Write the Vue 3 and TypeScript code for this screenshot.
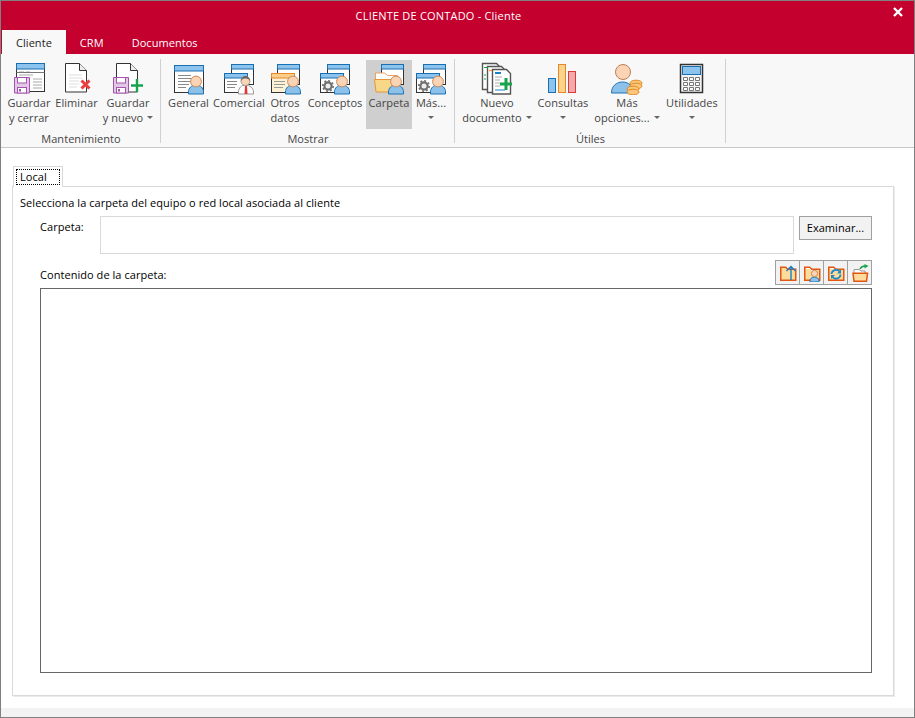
<script setup lang="ts">
interface Btn { id: string; lines: string[]; w: number; arrow?: 'inline' | 'below'; active?: boolean }
interface Group { label: string; buttons: Btn[] }

const groups: Group[] = [
  { label: 'Mantenimiento', buttons: [
    { id: 'save', lines: ['Guardar', 'y cerrar'], w: 48 },
    { id: 'del', lines: ['Eliminar'], w: 47 },
    { id: 'savenew', lines: ['Guardar', 'y nuevo'], w: 56, arrow: 'inline' },
  ] },
  { label: 'Mostrar', buttons: [
    { id: 'general', lines: ['General'], w: 47 },
    { id: 'comercial', lines: ['Comercial'], w: 54 },
    { id: 'otros', lines: ['Otros', 'datos'], w: 38 },
    { id: 'conceptos', lines: ['Conceptos'], w: 62 },
    { id: 'carpeta', lines: ['Carpeta'], w: 46, active: true },
    { id: 'mas', lines: ['Más...'], w: 38, arrow: 'below' },
  ] },
  { label: 'Útiles', buttons: [
    { id: 'doc', lines: ['Nuevo', 'documento'], w: 76, arrow: 'inline' },
    { id: 'chart', lines: ['Consultas'], w: 56, arrow: 'below' },
    { id: 'coins', lines: ['Más', 'opciones...'], w: 72, arrow: 'inline' },
    { id: 'calc', lines: ['Utilidades'], w: 58, arrow: 'below' },
  ] },
]
const tabs = ['Cliente', 'CRM', 'Documentos']
const tools = ['up', 'user', 'refresh', 'open']
</script>

<template>
  <div class="win">
    <svg class="defs" width="0" height="0">
      <defs>
        <g id="person">
          <path d="M15.500 32v-2c0-4 3-7 7.500-7s7.500 3 7.500 7v2z" fill="#8cc2ea" stroke="#1f72b4" />
          <circle cx="23" cy="19.500" r="5.400" fill="#fad4b4" stroke="#c98a5c" />
        </g>
        <g id="backwin">
          <rect x="8.500" y="2.500" width="22" height="20" fill="#fff" stroke="#333" />
          <rect x="8.500" y="2.500" width="22" height="4.500" fill="#8cc4ee" stroke="#1a6fb0" />
        </g>
        <g id="frontwin">
          <rect x="1.500" y="11.500" width="23" height="19" fill="#fff" stroke="#333" />
          <rect x="1.500" y="11.500" width="23" height="4.500" fill="#8cc4ee" stroke="#1a6fb0" />
        </g>
        <g id="floppy">
          <path d="M1.500 15.500h15v15.500h-15z" fill="#e2c8e6" stroke="#a354ad" />
          <rect x="4.500" y="15.500" width="9" height="5.500" fill="#fff" stroke="#a354ad" />
          <rect x="4.500" y="25.500" width="9" height="5.500" fill="#fff" stroke="#a354ad" />
          <rect x="6" y="27" width="2" height="2.500" fill="#a354ad" />
        </g>
        <g id="gear">
          <circle cx="9" cy="24" r="3.600" fill="#eee" stroke="#6f6f6f" stroke-width="2.200" />
          <circle cx="9" cy="24" r="5.200" fill="none" stroke="#6f6f6f" stroke-width="1.600" stroke-dasharray="2 2" />
        </g>
        <g id="page">
          <path d="M4.500 1.500h14l7 7v21.500h-21z" fill="#fff" stroke="#333" />
          <path d="M18.500 1.500v7h7" fill="#eee" stroke="#333" />
        </g>
        <g id="coin">
          <ellipse cx="0" cy="0" rx="6" ry="2.800" fill="#fbc77a" stroke="#e08a26" />
        </g>
      </defs>
    </svg>

    <header class="titlebar">
      <div class="title">CLIENTE DE CONTADO - Cliente</div>
      <svg class="close" width="10" height="10" viewBox="0 0 10 10">
        <path d="M1 1l8 8M9 1l-8 8" stroke="#fff" stroke-width="2.400" />
      </svg>
      <nav class="tabs">
        <span v-for="(t, i) in tabs" :key="t" class="tab" :class="{ on: i === 0 }">{{ t }}</span>
      </nav>
    </header>

    <section class="ribbon">
      <div v-for="g in groups" :key="g.label" class="group">
        <div class="btns">
          <div
            v-for="b in g.buttons"
            :key="b.id"
            class="btn"
            :class="{ active: b.active }"
            :style="{ width: b.w + 'px' }"
          >
            <svg class="ico" width="32" height="33" viewBox="0 0 32 33">
              <template v-if="b.id === 'save'">
                <rect x="3.500" y="1.500" width="28" height="28" fill="#fff" stroke="#333" />
                <rect x="3.500" y="1.500" width="28" height="5.500" fill="#8cc4ee" stroke="#1a6fb0" />
                <path d="M6 10h5M13 10h4M6 13h14M20 17h9M20 20h9M20 23h9M20 26h9" stroke="#aaa" />
                <path d="M3.500 10.500h28" stroke="#777" />
                <use href="#floppy" />
              </template>
              <template v-else-if="b.id === 'del'">
                <use href="#page" />
                <path d="M8 13h13M8 16h13M8 19h10M8 22h10M8 25h8" stroke="#ddd" />
                <path d="M20.500 18.500l8 8M28.500 18.500l-8 8" stroke="#ee3d3d" stroke-width="3" />
              </template>
              <template v-else-if="b.id === 'savenew'">
                <use href="#page" />
                <use href="#floppy" />
                <path d="M25 17v13M19 23.500h12" stroke="#17a44c" stroke-width="2.400" />
              </template>
              <template v-else-if="b.id === 'general'">
                <rect x="1.500" y="3.500" width="29" height="27" fill="#fff" stroke="#333" />
                <rect x="1.500" y="3.500" width="29" height="5.500" fill="#8cc4ee" stroke="#1a6fb0" />
                <path d="M5 13.500h13M5 16.500h13M5 19.500h13M5 22.500h11M5 25.500h8" stroke="#888" />
                <use href="#person" />
              </template>
              <template v-else-if="b.id === 'comercial'">
                <use href="#backwin" />
                <use href="#frontwin" />
                <path d="M4 19.500h10M4 22.500h10M4 25.500h8" stroke="#888" />
                <path d="M15.500 32v-2c0-4 3-7 7-7s8 3 8 7v2z" fill="#fff" stroke="#999" />
                <path d="M22 24h2l.5 8h-3z" fill="#e5383b" />
                <circle cx="22.500" cy="19" r="4.500" fill="#fad4b4" stroke="#999" />
                <path d="M18 19c0-3 2-5 4.500-5s4.500 2 4.500 5c-1-2-3-2.500-4.500-2.500s-3.500.5-4.500 2.500z" fill="#666" />
              </template>
              <template v-else-if="b.id === 'otros'">
                <use href="#backwin" />
                <rect x="2.500" y="11.500" width="23" height="19" fill="#fdf1d6" stroke="#333" />
                <rect x="2.500" y="11.500" width="23" height="4.500" fill="#f9cf8a" stroke="#e8872a" />
                <path d="M5 19.500h11M5 22.500h11M5 25.500h9" stroke="#999" />
                <g transform="translate(1 0)"><use href="#person" /></g>
              </template>
              <template v-else-if="b.id === 'conceptos' || b.id === 'mas'">
                <use href="#backwin" />
                <use href="#frontwin" />
                <use href="#gear" />
                <use href="#person" />
              </template>
              <template v-else-if="b.id === 'carpeta'">
                <use href="#backwin" />
                <path d="M2.500 18v-7h9l3 2.500h10v5z" fill="#fff" stroke="#eda05c" />
                <path d="M1.500 17.500h24v12.500h-22.500z" fill="#f8d788" stroke="#e8963c" />
                <use href="#person" />
              </template>
              <template v-else-if="b.id === 'doc'">
                <path d="M1.500 1.500h14l3 3v23h-17z" fill="#fff" stroke="#555" stroke-width="1.400" />
                <path d="M6.500 4.500h14l3 3v23h-17z" fill="#fff" stroke="#555" stroke-width="1.400" />
                <path d="M11.500 7.500h14l4 4v20.500h-18z" fill="#fff" stroke="#555" stroke-width="1.400" />
                <path d="M3 5.500h4M3 13h2M3 17h2" stroke="#17a44c" stroke-width="1.200" />
                <path d="M8 8.500h3" stroke="#f2a33a" stroke-width="1.400" />
                <path d="M14 11h6" stroke="#1a7fc4" stroke-width="2" />
                <path d="M14 15h7M14 18h5M14 21h5M14 24h5" stroke="#aaa" />
                <path d="M14 28h10" stroke="#1a7fc4" />
                <path d="M25 16v12M19 22h12" stroke="#17a44c" stroke-width="3" />
              </template>
              <template v-else-if="b.id === 'chart'">
                <rect x="1.500" y="16.500" width="7" height="14" fill="#8cc4ee" stroke="#1a6fb0" />
                <rect x="11.500" y="2.500" width="7" height="28" fill="#fbd48a" stroke="#e8872a" />
                <rect x="21.500" y="9.500" width="7" height="21" fill="#f3aaaa" stroke="#dd3a3a" />
              </template>
              <template v-else-if="b.id === 'coins'">
                <path d="M0.500 31c0-7 5-11 11-11s11 4 11 11z" fill="#8cc2ea" stroke="#1f72b4" />
                <circle cx="12" cy="10" r="7.500" fill="#fad4b4" stroke="#c08056" />
                <use href="#coin" x="25" y="21" />
                <use href="#coin" x="25" y="24" />
                <use href="#coin" x="22" y="27" />
                <use href="#coin" x="22" y="30" />
              </template>
              <template v-else-if="b.id === 'calc'">
                <rect x="4.500" y="2.500" width="22" height="28" fill="#f4f4f4" stroke="#333" stroke-width="1.500" />
                <rect x="6.500" y="4.500" width="18" height="8" fill="#8cc4ee" stroke="#1a6fb0" />
                <path d="M7.500 15.500h4v3h-4zM13.500 15.500h4v3h-4zM19.500 15.500h4v3h-4zM7.500 20.500h4v3h-4zM13.500 20.500h4v3h-4zM19.500 20.500h4v3h-4zM7.500 25.500h4v3h-4zM13.500 25.500h4v3h-4zM19.500 25.500h4v3h-4z" fill="#fff" stroke="#777" />
              </template>
            </svg>
            <div v-for="(l, i) in b.lines" :key="l" class="line">
              {{ l }}<i v-if="b.arrow === 'inline' && i === b.lines.length - 1" class="arrow in"></i>
            </div>
            <div v-if="b.arrow === 'below'" class="line"><i class="arrow"></i></div>
          </div>
        </div>
        <div class="glabel">{{ g.label }}</div>
      </div>
    </section>

    <main class="body">
      <div class="pagetabs"><div class="ptab"><span class="focus">Local</span></div></div>
      <div class="panel">
        <div class="intro">Selecciona la carpeta del equipo o red local asociada al cliente</div>
        <div class="row">
          <label class="lab">Carpeta:</label>
          <div class="input"></div>
          <div class="browse">Examinar...</div>
        </div>
        <div class="listhead">
          <span>Contenido de la carpeta:</span>
          <div class="tools">
            <div v-for="t in tools" :key="t" class="tool">
              <svg width="18" height="18" viewBox="0 0 18 18">
                <template v-if="t !== 'open'">
                  <path d="M1.750 16.250v-13h5l2 2h8v11z" fill="#fcdc9c" stroke="#e2570f" stroke-width="1.500" />
                  <path v-if="t !== 'up'" d="M3 4.500h3.500l2 2h3" fill="none" stroke="#fff" />
                </template>
                <template v-if="t === 'up'">
                  <path d="M12 16V2.500M7.500 7l4.500-4.500 4.500 4.500" fill="none" stroke="#1a7fc4" stroke-width="1.400" />
                </template>
                <template v-else-if="t === 'user'">
                  <path d="M7 18v-1c0-2.500 2-4 4.500-4s4.500 1.500 4.500 4v1z" fill="#8cc2ea" stroke="#1f72b4" />
                  <circle cx="11.500" cy="9.500" r="3.200" fill="#fad4b4" stroke="#c98a5c" />
                </template>
                <template v-else-if="t === 'refresh'">
                  <path d="M4.500 10a4.500 4.500 0 0 1 8-2.500M13.500 10.500a4.500 4.500 0 0 1-8 2.500" fill="none" stroke="#1a86c8" stroke-width="1.800" />
                  <path d="M14 5.500v4h-4zM4 15v-4h4z" fill="#1a86c8" />
                </template>
                <template v-else>
                  <path d="M3 9v-3.500h5l2 1.500h4v2" fill="#fff" stroke="#999" />
                  <path d="M2 9.250h14.500l-1 8h-12.500z" fill="#fcdc9c" stroke="#e2570f" stroke-width="1.500" />
                  <path d="M9 5c1-2 3-3 5-3" fill="none" stroke="#17a44c" stroke-width="1.500" />
                  <path d="M13.500 0l4 2-4 2.500z" fill="#17a44c" />
                </template>
              </svg>
            </div>
          </div>
        </div>
        <div class="list"></div>
      </div>
    </main>
    <footer class="foot"></footer>
  </div>
</template>

<style scoped>
.win {
  width: 915px;
  height: 718px;
  box-sizing: border-box;
  border: 1px solid #808080;
  display: flex;
  flex-direction: column;
  background: #fff;
  font-family: "Open Sans", "Noto Sans", sans-serif;
  font-size: 11px;
  letter-spacing: 0.05px;
  color: #000;
  overflow: hidden;
}
.defs { position: absolute; }
.titlebar {
  position: relative;
  height: 53px;
  background: #c4002f;
  flex: none;
  display: flex;
  flex-direction: column;
}
.title {
  height: 29px;
  line-height: 29px;
  text-align: center;
  color: #fff;
  padding-right: 38px;
  letter-spacing: 0.2px;
}
.close { position: absolute; right: 11px; top: 6px; }
.tabs { display: flex; padding-left: 1px; height: 24px; }
.tab {
  padding: 0 14px;
  color: #fff;
  line-height: 26px;
}
.tab.on {
  background: #f8f8f8;
  color: #222;
}
.ribbon {
  display: flex;
  flex: none;
  background: #f8f8f8;
  border-bottom: 1px solid #c8c8c8;
  box-sizing: border-box;
  height: 94px;
  color: #444;
}
.group {
  margin: 5px 0 4px;
  padding: 0 4px;
  border-right: 1px solid #d0d0d0;
  display: flex;
  flex-direction: column;
}
.btns { display: flex; margin-top: 1px; height: 69px; }
.btn {
  display: flex;
  flex-direction: column;
  align-items: center;
  height: 69px;
  flex: none;
}
.btn.active { background: #cfcfcf; }
.ico { display: block; margin-top: 2px; flex: none; }
.line {
  line-height: 15px;
  white-space: nowrap;
  display: flex;
  align-items: center;
  height: 15px;
}
.arrow {
  display: block;
  width: 0;
  height: 0;
  border: 3px solid transparent;
  border-top: 3px solid #666;
  border-bottom: 0;
}
.arrow.in { margin-left: 4px; }
.glabel {
  height: 14px;
  line-height: 20px;
  text-align: center;
  padding-left: 1px;
}
.body {
  flex: 1;
  padding: 18px 20px 12px 11px;
  display: flex;
  flex-direction: column;
  min-height: 0;
}
.pagetabs { display: flex; padding-left: 1px; height: 20px; flex: none; position: relative; z-index: 1; }
.ptab {
  width: 50px;
  height: 21px;
  box-sizing: border-box;
  border: 1px solid #d9d9d9;
  border-bottom: 0;
  background: #fff;
  padding: 2px 2px 0;
}
.focus {
  display: block;
  height: 16px;
  line-height: 13px;
  box-sizing: border-box;
  border: 1px dotted #000;
  padding-left: 3px;
}
.panel {
  flex: 1;
  min-height: 0;
  border: 1px solid #d9d9d9;
  box-shadow: 1px 1px 0 #ebebeb;
  padding: 8px 21px 22px 7px;
  display: flex;
  flex-direction: column;
}
.intro { height: 21px; line-height: 15px; flex: none; }
.row { display: flex; padding-left: 20px; height: 38px; flex: none; }
.lab { width: 60px; line-height: 22px; }
.input {
  width: 694px;
  box-sizing: border-box;
  border: 1px solid #d9d9d9;
  height: 38px;
}
.browse {
  margin-left: 5px;
  width: 73px;
  height: 24px;
  box-sizing: border-box;
  border: 1px solid #a0a0a0;
  background: #f2f2f2;
  text-align: center;
  line-height: 22px;
}
.listhead {
  display: flex;
  justify-content: space-between;
  align-items: center;
  padding-left: 20px;
  margin-top: 6px;
  height: 25px;
  flex: none;
}
.listhead span { padding-top: 3px; }
.tools { display: flex; }
.tool {
  width: 25px;
  height: 25px;
  box-sizing: border-box;
  border: 1px solid #a0a0a0;
  margin-left: -1px;
  background: #f2f2f2;
  display: flex;
  align-items: center;
  justify-content: center;
}
.list {
  margin: 3px 0 0 20px;
  flex: 1;
  border: 1px solid #666;
}
.foot { height: 9px; background: #f3f3f3; flex: none; }
</style>
